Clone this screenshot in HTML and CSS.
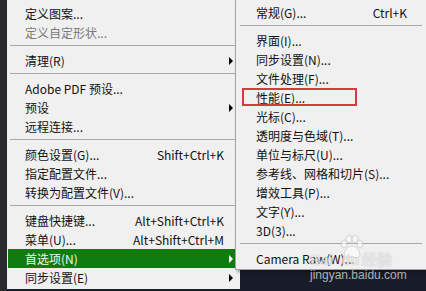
FILE: index.html
```html
<!DOCTYPE html>
<html lang="zh-CN">
<head>
    <meta charset="UTF-8">
    <title>首选项菜单</title>
    <link rel="stylesheet" href="styles.css">
</head>
<body>
    <div class="screen">
        <div class="edge"></div>

        <!-- Main menu -->
        <div class="menu main">
            <div class="item"><span class="label">定义图案...</span></div>
            <div class="item disabled"><span class="label">定义自定形状...</span></div>
            <div class="sep"></div>
            <div class="item"><span class="label">清理(R)</span><span class="key"></span><span class="arrow"></span></div>
            <div class="sep"></div>
            <div class="item"><span class="label">Adobe PDF 预设...</span></div>
            <div class="item"><span class="label">预设</span><span class="key"></span><span class="arrow"></span></div>
            <div class="item"><span class="label">远程连接...</span></div>
            <div class="sep"></div>
            <div class="item"><span class="label">颜色设置(G)...</span><span class="key">Shift+Ctrl+K</span></div>
            <div class="item"><span class="label">指定配置文件...</span></div>
            <div class="item"><span class="label">转换为配置文件(V)...</span></div>
            <div class="sep"></div>
            <div class="item"><span class="label">键盘快捷键...</span><span class="key">Alt+Shift+Ctrl+K</span></div>
            <div class="item"><span class="label">菜单(U)...</span><span class="key">Alt+Shift+Ctrl+M</span></div>
            <div class="item active"><span class="label">首选项(N)</span><span class="key"></span><span class="arrow"></span></div>
            <div class="item"><span class="label">同步设置(E)</span><span class="key"></span><span class="arrow"></span></div>
        </div>

        <!-- Preferences submenu -->
        <div class="menu sub">
            <div class="item"><span class="label">常规(G)...</span><span class="key">Ctrl+K</span></div>
            <div class="sep"></div>
            <div class="item"><span class="label">界面(I)...</span></div>
            <div class="item"><span class="label">同步设置(N)...</span></div>
            <div class="item"><span class="label">文件处理(F)...</span></div>
            <div class="item marked"><span class="label">性能(E)...</span><span class="mark"></span></div>
            <div class="item"><span class="label">光标(C)...</span></div>
            <div class="item"><span class="label">透明度与色域(T)...</span></div>
            <div class="item"><span class="label">单位与标尺(U)...</span></div>
            <div class="item"><span class="label">参考线、网格和切片(S)...</span></div>
            <div class="item"><span class="label">增效工具(P)...</span></div>
            <div class="item"><span class="label">文字(Y)...</span></div>
            <div class="item"><span class="label">3D(3)...</span></div>
            <div class="sep"></div>
            <div class="item"><span class="label">Camera Raw(W)...</span></div>
        </div>

        <!-- Watermark -->
        <div class="watermark">
            <svg class="paw" width="28" height="24" viewBox="0 0 28 24">
                <ellipse cx="6" cy="9" rx="3" ry="4"/>
                <ellipse cx="11" cy="4" rx="3" ry="3.6"/>
                <ellipse cx="17" cy="4" rx="3" ry="3.6"/>
                <ellipse cx="22" cy="9" rx="3" ry="4"/>
                <path d="M14 11c-4 0-8 5-8 8.5 0 2.5 2.5 3.5 4.5 3 1.5-.4 2.3-.9 3.5-.9s2 .5 3.5.9c2 .5 4.5-.5 4.5-3C22 16 18 11 14 11z"/>
            </svg>
            <div class="brand">Bai<span class="du">du</span>经验</div>
            <div class="site">jingyan.baidu.com</div>
        </div>
    </div>
</body>
</html>
```

FILE: styles.css
```css
* {
    margin: 0;
    padding: 0;
    box-sizing: border-box;
}

body {
    background: #1a1e2a;
    font-family: "Noto Sans CJK SC", "Noto Sans", sans-serif;
    font-size: 12px;
    color: #111;
}

.screen {
    position: relative;
    display: flex;
    width: 426px;
    height: 291px;
    overflow: hidden;
    background: #181c28;
}

.edge {
    width: 7px;
    background: #2a2a2c;
}

.menu {
    background: #f0f0f0;
}

.main {
    width: 233px;
    height: 289px;
    padding: 4px 0 0 1px;
}

.sub {
    position: absolute;
    left: 235px;
    top: 0;
    width: 191px;
    height: 270px;
    padding-top: 3px;
    border-left: 1px solid #a3a3a3;
    border-bottom: 1px solid #a3a3a3;
    box-shadow: 2px 2px 3px rgba(0, 0, 0, 0.35);
}

.item {
    position: relative;
    display: grid;
    grid-template-columns: 1fr auto 16px;
    align-items: center;
    height: 19px;
    padding-left: 17px;
    line-height: 19px;
    white-space: nowrap;
}

.sub .item {
    grid-template-columns: 1fr auto;
    padding-left: 20px;
    padding-right: 19px;
}

.disabled {
    color: #7a7a7a;
}

.active {
    background: #107c10;
    color: #f4f4f4;
}

.key {
    text-align: right;
}

.arrow {
    justify-self: start;
    margin-left: 5px;
    width: 0;
    height: 0;
    border-left: 4px solid #000;
    border-top: 4px solid transparent;
    border-bottom: 4px solid transparent;
}

.active .arrow {
    border-left-color: #fff;
}

.sep {
    height: 9px;
    padding-top: 3px;
    margin-left: 2px;
}

.sep::before {
    content: "";
    display: block;
    height: 1px;
    background: #a8a8a8;
}

.sub .sep {
    margin: 0 4px;
}

.mark {
    position: absolute;
    left: 6px;
    top: 0;
    width: 115px;
    height: 18px;
    border: 2px solid #d43b40;
}

.watermark {
    position: absolute;
    left: 310px;
    top: 235px;
    width: 90px;
    text-align: center;
}

.paw {
    display: block;
    margin: 0 auto 0 28px;
    fill: rgba(255, 255, 255, 0.55);
    stroke: rgba(150, 150, 150, 0.35);
    stroke-width: 1;
}

.brand {
    margin-top: -7px;
    font-family: "Liberation Sans", sans-serif;
    font-size: 15px;
    font-weight: bold;
    line-height: 16px;
    text-align: left;
    color: rgba(255, 255, 255, 0.6);
    text-shadow: 0 0 1px rgba(120, 120, 120, 0.45);
}

.brand .du {
    margin: 0 2px 0 8px;
}

.site {
    margin-top: 1px;
    font-family: "Liberation Sans", sans-serif;
    font-size: 12px;
    line-height: 13px;
    color: rgba(225, 225, 230, 0.75);
}
```
